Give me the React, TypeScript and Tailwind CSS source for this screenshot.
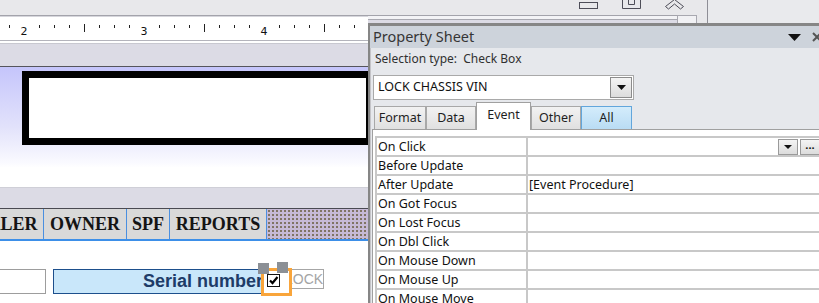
import React from "react";

const ui = "font-['Noto_Sans','Open_Sans',sans-serif]";

const formTabs = [
  { label: "DEALER", w: "w-[87px]" },
  { label: "OWNER", w: "w-[83px]" },
  { label: "SPF", w: "w-[43px]" },
  { label: "REPORTS", w: "w-[97px]" },
];

const sheetTabs = [
  { label: "Format", w: "w-[52px]" },
  { label: "Data", w: "w-[50px]" },
  { label: "Event", w: "w-[55px]", active: true },
  { label: "Other", w: "w-[50px]" },
  { label: "All", w: "w-[51px]", all: true },
];

const events = [
  { name: "On Click", value: "", buttons: true },
  { name: "Before Update", value: "" },
  { name: "After Update", value: "[Event Procedure]" },
  { name: "On Got Focus", value: "" },
  { name: "On Lost Focus", value: "" },
  { name: "On Dbl Click", value: "" },
  { name: "On Mouse Down", value: "" },
  { name: "On Mouse Up", value: "" },
  { name: "On Mouse Move", value: "" },
];

const labels: Record<number, string> = { 24: "2", 144: "3", 264: "4" };

// ruler above the form, 120px per inch, ticks every eighth
const Ruler: React.FC = () => {
  const ticks: React.ReactNode[] = [];
  for (let k = -1; k < 24; k++) {
    const x = 24 + 15 * k;
    const m = ((k % 8) + 8) % 8;
    if (m === 0) continue;
    const big = m === 4;
    ticks.push(
      <line key={k} x1={x + 0.5} x2={x + 0.5} y1={big ? 7 : 8} y2={big ? 15 : 11} stroke="#222" strokeWidth={1} />
    );
  }
  return (
    <svg width={368} height={23} className="block shrink-0 bg-white">
      {ticks}
      {Object.entries(labels).map(([x, t]) => (
        <text key={x} x={Number(x)} y={18} fontSize={11} textAnchor="middle" fill="#111" fontFamily="DejaVu Sans, sans-serif">
          {t}
        </text>
      ))}
    </svg>
  );
};

const DropTriangle: React.FC<{ w?: number; h?: number }> = ({ w = 8, h = 4 }) => (
  <svg width={w} height={h} viewBox={`0 0 ${w} ${h}`}>
    <polygon points={`0,0 ${w},0 ${w / 2},${h}`} fill="#111" />
  </svg>
);

const FormDesigner: React.FC = () => (
  <div className="w-[368px] shrink-0 h-full flex flex-col overflow-hidden">
    <div className="h-[15px] shrink-0 bg-[#e8e8eb]" />
    <div className="h-px shrink-0 bg-[#a3a3ab]" />
    <div className="h-px shrink-0 bg-[#d6d6dc]" />
    <Ruler />
    <div className="h-px shrink-0 bg-[#b4b4bc]" />
    <div className="h-[2px] shrink-0 bg-white" />
    <div className="h-px shrink-0 bg-[#c8c8d0]" />
    <div className="h-[22px] shrink-0 bg-[#dcdbe5]" />
    <div className="h-px shrink-0 bg-[#55555c]" />

    {/* form header */}
    <div className="h-[120px] shrink-0 pt-[4px] pl-[22px] bg-[linear-gradient(180deg,#c5c5fb_0%,#e2e2fb_50%,#fafaff_80%,#ffffff_84%)]">
      <div className="w-[351px] h-[74px] border-[7px] border-black bg-white" />
    </div>

    <div className="h-px shrink-0 bg-[#cfcfd7]" />
    <div className="h-[20px] shrink-0 bg-[#dcdbe5]" />
    <div className="h-px shrink-0 bg-[#4a4a52]" />

    {/* tab control */}
    <div className="h-[30px] shrink-0 flex -ml-[43px]">
      {formTabs.map((t) => (
        <div
          key={t.label}
          className={`${t.w} shrink-0 h-full flex items-center justify-center bg-[#d9d9d9] border-r border-[#4a8fe0] font-['Liberation_Serif',serif] font-bold text-[18px] text-[#141414]`}
        >
          {t.label}
        </div>
      ))}
      <div className="flex-1 bg-[#c6bad6] [background-image:radial-gradient(circle,#7d715f_0.7px,transparent_0.9px)] [background-size:4px_4px]" />
    </div>
    <div className="h-[2px] shrink-0 bg-[#3d8fe8]" />

    {/* detail */}
    <div className="flex-1 bg-white relative">
      <div className="flex items-start pt-[28px] -ml-[10px]">
        <div className="w-[56px] h-[25px] shrink-0 border border-[#9d9d9d]" />
        <div className="ml-[7px] w-[215px] h-[25px] shrink-0 border border-[#1d4f8c] bg-[#c9e7fa] flex items-center justify-end pr-[4px] font-['Liberation_Sans',sans-serif] font-bold text-[18px] text-[#1e3c68]">
          Serial number
        </div>
        <div className="ml-[15px] w-[41px] h-[20px] shrink-0 border border-[#a6a6a6] flex items-center pl-px font-['Liberation_Sans',sans-serif] text-[14px] text-[#a4a4a4]">
          LOCK
        </div>
      </div>

      {/* selected check box */}
      <div className="absolute left-[261px] top-[27px] w-[31px] h-[28px] border-[3px] border-[#f9a53b] bg-white flex items-start pl-[3px] pt-[3px]">
        <svg width={13} height={13} viewBox="0 0 13 13">
          <rect x={0.5} y={0.5} width={12} height={12} fill="white" stroke="#111" />
          <path d="M3 6.5 L5.5 9 L10.5 3" fill="none" stroke="#000" strokeWidth={2.2} />
        </svg>
      </div>
      <div className="absolute left-[258px] top-[22px] w-[11px] h-[11px] bg-[#8c9096]" />
      <div className="absolute left-[277px] top-[21px] w-[11px] h-[11px] bg-[#8c9096]" />
    </div>
  </div>
);

const TopChrome: React.FC = () => (
  <div className="h-[23px] shrink-0 flex">
    <div className="w-[339px] shrink-0 flex flex-col bg-[#e8e8eb]">
      <div className="h-[15px] flex items-start pl-[211px] gap-[24px]">
        <svg width={19} height={15}>
          <rect x={0.5} y={2.5} width={18} height={6} fill="none" stroke="#4d4d58" />
        </svg>
        <svg width={19} height={15}>
          <path d="M0.5 -1 V8.5 H18.5 V-1" fill="none" stroke="#4d4d58" />
          <path d="M6.5 -1 V4.5 H12.5 V-1" fill="none" stroke="#4d4d58" />
        </svg>
        <svg width={19} height={15}>
          <polygon points="0.5,6.5 9.5,-0.5 18.5,6.5 15.5,9 9.5,4 3.5,9" fill="none" stroke="#4d4d58" />
        </svg>
      </div>
      <div className="h-[8px] flex">
        <div className="w-[309px] flex flex-col">
          <div className="h-px bg-[#a3a3ab]" />
          <div className="h-[3px] bg-[#f3f3f6]" />
          <div className="h-px bg-[#a8a8b0]" />
          <div className="flex-1 bg-[#dcdbe5]" />
        </div>
        <div className="w-[20px] h-[8px] border border-b-0 border-[#a8a8b0] bg-[#f1f1f4]" />
      </div>
    </div>
    <div className="w-px bg-[#8e8e96]" />
    <div className="flex-1 bg-[#e9eaed]" />
  </div>
);

const PropertySheet: React.FC = () => (
  <div className={`flex-1 min-w-0 h-full flex flex-col ${ui}`}>
    <TopChrome />
    <div className="flex-1 min-h-0 flex flex-col border-l-2 border-t-[3px] border-[#868686] bg-[#e6e8ec] shadow-[inset_1px_0_0_#c4c4c8]">
      {/* title */}
      <div className="h-[22px] shrink-0 flex items-center bg-[#cdd3db] pl-[3px] overflow-hidden">
        <span className="text-[14.5px] text-[#363636]">Property Sheet</span>
        <div className="flex-1" />
        <DropTriangle w={13} h={7} />
        <svg width={10} height={10} className="ml-[11px] -mr-[3px] shrink-0">
          <path d="M1 1 L9 9 M9 1 L1 9" stroke="#555" strokeWidth={2} />
        </svg>
      </div>

      <div className="h-[22px] shrink-0 flex items-center pl-[5px] text-[12px] text-[#303030] whitespace-pre">
        Selection type:  Check Box
      </div>

      {/* control picker */}
      <div className="mt-[5px] ml-[3px] w-[261px] h-[25px] shrink-0 flex items-center border border-[#a9a9a9] bg-white">
        <span className="pl-[4px] text-[12.5px] text-[#111] flex-1">LOCK CHASSIS VIN</span>
        <div className="w-[22px] h-[21px] mr-px flex items-center justify-center border border-[#8c8c8c] bg-[linear-gradient(180deg,#f4f4f4,#dcdcdc)]">
          <DropTriangle w={9} h={5} />
        </div>
      </div>

      {/* tabs */}
      <div className="h-[29px] shrink-0 flex items-end pl-[4px]">
        {sheetTabs.map((t) => (
          <div
            key={t.label}
            className={`${t.w} shrink-0 flex justify-center text-[12.5px] text-[#1e1e1e] border border-b-0 ${
              t.active
                ? "h-[28px] -mb-px relative z-10 bg-white border-[#a0a0a0] items-start pt-[3px]"
                : t.all
                ? "h-[23px] bg-[linear-gradient(180deg,#d4ecfb,#b9dcf4)] border-[#62a6dc] items-center"
                : "h-[23px] bg-[linear-gradient(180deg,#f2f2f2,#e0e0e0)] border-[#a8a8a8] items-center"
            }`}
          >
            {t.label}
          </div>
        ))}
      </div>

      {/* event list */}
      <div className="flex-1 min-h-0 ml-[2px] pt-[6px] pl-[2px] bg-white border-t border-l border-[#a0a0a0] overflow-hidden">
        <div className="border-t-2 border-l-2 border-[#c8c8c8]">
          {events.map((e) => (
            <div key={e.name} className="h-[19px] flex border-b-2 border-[#c8c8c8] text-[12.5px] text-[#111] leading-[17px]">
              <div className="w-[151px] shrink-0 pl-px border-r-2 border-[#c8c8c8] whitespace-nowrap">{e.name}</div>
              <div className="flex-1 flex items-center pl-px whitespace-nowrap">
                <span className="flex-1">{e.value}</span>
                {e.buttons && (
                  <>
                    <div className="w-[20px] h-[16px] flex items-center justify-center border border-[#9a9a9a] bg-[linear-gradient(180deg,#f4f4f4,#dcdcdc)]">
                      <DropTriangle w={8} h={4} />
                    </div>
                    <div className="ml-[2px] w-[19px] h-[16px] flex items-center justify-center border border-r-0 border-[#9a9a9a] bg-[linear-gradient(180deg,#f4f4f4,#dcdcdc)] text-[11px] font-bold leading-none pb-[4px]">
                      ...
                    </div>
                  </>
                )}
              </div>
            </div>
          ))}
        </div>
      </div>
    </div>
  </div>
);

export default function App() {
  return (
    <div className="w-[819px] h-[303px] overflow-hidden flex bg-[#e8e8eb]">
      <FormDesigner />
      <PropertySheet />
    </div>
  );
}
